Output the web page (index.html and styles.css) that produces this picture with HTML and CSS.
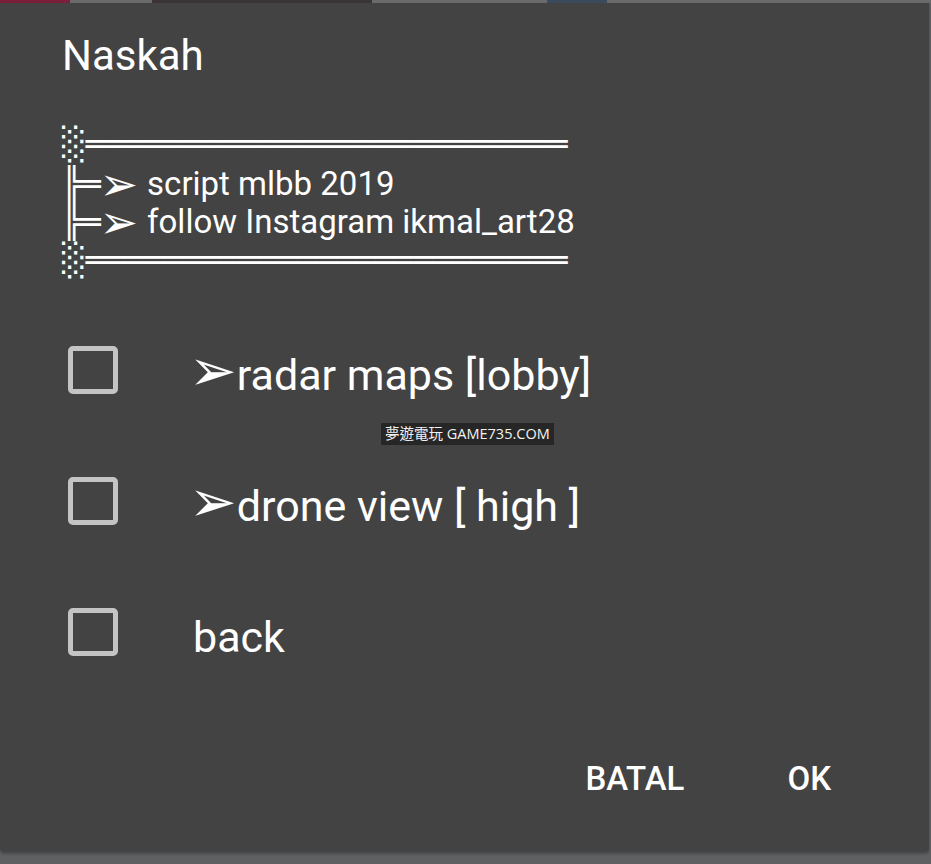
FILE: index.html
```html
<!DOCTYPE html>
<html lang="id">
<head>
    <meta charset="UTF-8">
    <meta name="viewport" content="width=device-width, initial-scale=1.0">
    <title>Naskah</title>
    <link rel="stylesheet" href="styles.css">
</head>
<body>
    <div class="backdrop-strip">
        <span class="seg seg-red"></span>
        <span class="seg seg-gray"></span>
        <span class="seg seg-dark"></span>
        <span class="seg seg-gray2"></span>
        <span class="seg seg-blue"></span>
        <span class="seg seg-gray3"></span>
    </div>

    <div class="dialog">
        <h1 class="title">Naskah</h1>

        <section class="banner">
            <div class="banner-row banner-top">
                <span class="shade">░</span><span class="rule">═════════════════════════</span>
            </div>
            <div class="banner-row">
                <span class="branch">╠═</span><span class="arrow">➢</span><span class="banner-text">script mlbb 2019</span>
            </div>
            <div class="banner-row">
                <span class="branch">╠═</span><span class="arrow">➢</span><span class="banner-text">follow Instagram ikmal_art28</span>
            </div>
            <div class="banner-row">
                <span class="shade">░</span><span class="rule">═════════════════════════</span>
            </div>
        </section>

        <ul class="options">
            <li class="option">
                <span class="checkbox"></span>
                <span class="option-label"><span class="arrow">➢</span>radar maps [lobby]</span>
            </li>
            <li class="option">
                <span class="checkbox"></span>
                <span class="option-label"><span class="arrow">➢</span>drone view [ high ]</span>
            </li>
            <li class="option">
                <span class="checkbox"></span>
                <span class="option-label">back</span>
            </li>
        </ul>

        <div class="actions">
            <button class="action">BATAL</button>
            <button class="action">OK</button>
        </div>

        <div class="watermark">夢遊電玩 GAME735.COM</div>
    </div>
</body>
</html>
```

FILE: styles.css
```css
* {
    margin: 0;
    padding: 0;
    box-sizing: border-box;
}

body {
    font-family: Roboto, 'DejaVu Sans', sans-serif;
    background: #5f6062;
    width: 931px;
    height: 864px;
    overflow: hidden;
    color: #ffffff;
}

/* bit of the app showing behind the dialog */
.backdrop-strip {
    display: flex;
    height: 3px;
}

.seg {
    display: block;
    height: 100%;
}

.seg-red { width: 70px; background: #7c1f3b; }
.seg-gray { width: 82px; background: #6a6a6a; }
.seg-dark { width: 220px; background: #3a3434; }
.seg-gray2 { width: 175px; background: #6a6a6a; }
.seg-blue { width: 60px; background: #3c4a5e; }
.seg-gray3 { flex: 1; background: #6a6a6a; }

.dialog {
    position: relative;
    width: 929px;
    height: 849px;
    background: #434343;
    border-radius: 0 0 4px 4px;
    box-shadow: 0 2px 3px rgba(0, 0, 0, 0.25);
    padding: 28px 0 0 62px;
}

.title {
    font-size: 42px;
    font-weight: 400;
    line-height: 50px;
}

.banner {
    margin-top: 43px;
    line-height: 38px;
}

.banner-row {
    display: flex;
    align-items: center;
    height: 38px;
    white-space: nowrap;
}

.banner-top {
    height: 41px;
    align-items: flex-start;
    padding-top: 1px;
}

.shade,
.branch,
.rule {
    font-family: 'DejaVu Sans', sans-serif;
    font-size: 32px;
}

.shade {
    margin-right: -1px;
}

.arrow {
    font-family: 'DejaVu Sans', sans-serif;
}

.banner .arrow {
    font-size: 46px;
    line-height: 30px;
    margin-left: -1px;
    margin-right: 9px;
}

.banner-text {
    font-size: 33px;
}

.options {
    list-style: none;
    margin-top: 25px;
}

.option {
    display: flex;
    align-items: center;
    height: 131px;
}

.checkbox {
    width: 50px;
    height: 48px;
    margin-left: 6px;
    border: 5px solid #c4c4c4;
    border-radius: 5px;
}

.option-label {
    margin-left: 75px;
    font-size: 43px;
    line-height: 50px;
    position: relative;
    top: 5px;
}

.option-label .arrow {
    font-size: 57px;
    line-height: 40px;
    margin-left: -4px;
    margin-right: 0;
}

.actions {
    display: flex;
    justify-content: flex-end;
    gap: 103px;
    margin-top: 62px;
    padding-right: 98px;
}

.action {
    background: none;
    border: none;
    color: #ffffff;
    font-family: Roboto, sans-serif;
    font-size: 33px;
    font-weight: 500;
    line-height: 40px;
}

.watermark {
    position: absolute;
    left: 381px;
    top: 420px;
    padding: 0 4px;
    height: 22px;
    line-height: 22px;
    background: #262626;
    color: #f2f2f2;
    font-family: 'Open Sans', 'Noto Sans CJK TC', sans-serif;
    font-size: 14.5px;
}
```
